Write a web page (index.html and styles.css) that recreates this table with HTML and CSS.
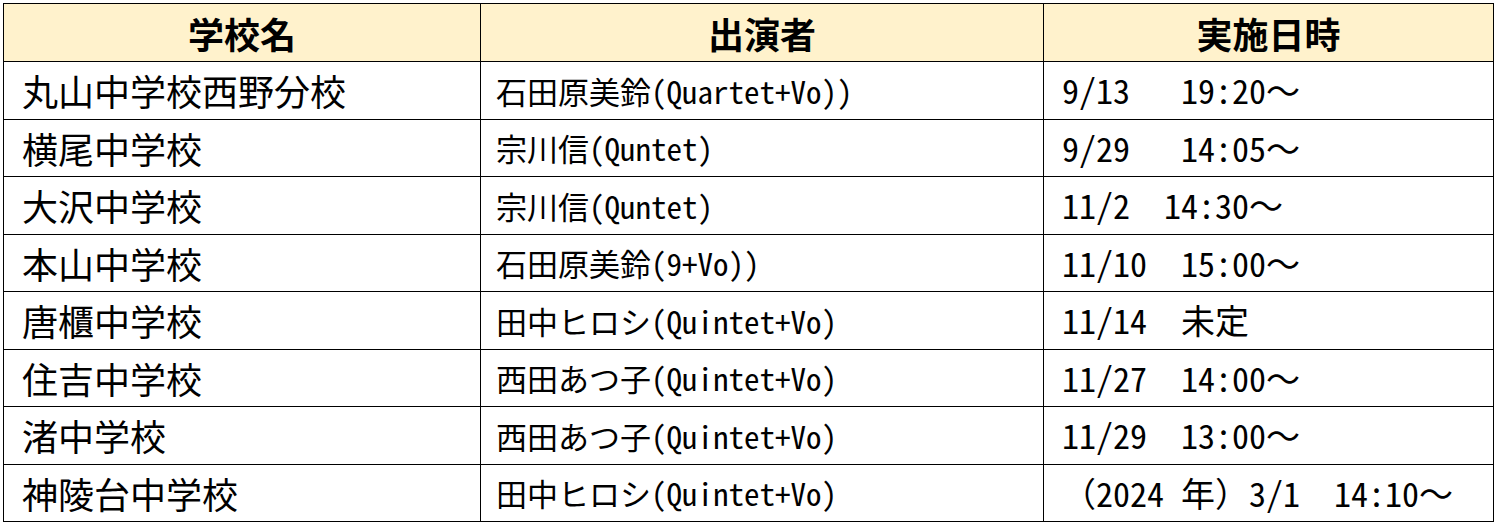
FILE: index.html
```html
<!DOCTYPE html>
<html lang="ja">
<head>
<meta charset="utf-8">
<title>学校公演一覧</title>
<link rel="stylesheet" href="styles.css">
</head>
<body>
<table class="schedule">
  <colgroup>
    <col class="col-school">
    <col class="col-performer">
    <col class="col-date">
  </colgroup>
  <thead>
    <tr class="head-row">
      <th>学校名</th>
      <th>出演者</th>
      <th>実施日時</th>
    </tr>
  </thead>
  <tbody>
    <tr><td class="school">丸山中学校西野分校</td><td class="performer">石田原美鈴(Quartet+Vo))</td><td class="date">9/13<span class="fw">　</span> 19:20<span class="fw">～</span></td></tr>
    <tr><td class="school">横尾中学校</td><td class="performer">宗川信(Quntet)</td><td class="date">9/29<span class="fw">　</span> 14:05<span class="fw">～</span></td></tr>
    <tr><td class="school">大沢中学校</td><td class="performer">宗川信(Quntet)</td><td class="date">11/2<span class="fw">　</span>14:30<span class="fw">～</span></td></tr>
    <tr><td class="school">本山中学校</td><td class="performer">石田原美鈴(9+Vo))</td><td class="date">11/10<span class="fw">　</span>15:00<span class="fw">～</span></td></tr>
    <tr><td class="school">唐櫃中学校</td><td class="performer">田中ヒロシ(Quintet+Vo)</td><td class="date">11/14<span class="fw">　</span>未定</td></tr>
    <tr><td class="school">住吉中学校</td><td class="performer">西田あつ子(Quintet+Vo)</td><td class="date">11/27<span class="fw">　</span>14:00<span class="fw">～</span></td></tr>
    <tr><td class="school">渚中学校</td><td class="performer">西田あつ子(Quintet+Vo)</td><td class="date">11/29<span class="fw">　</span>13:00<span class="fw">～</span></td></tr>
    <tr><td class="school">神陵台中学校</td><td class="performer">田中ヒロシ(Quintet+Vo)</td><td class="date"><span class="fw">（</span>2024 年<span class="fw">）</span>3/1<span class="fw">　</span>14:10<span class="fw">～</span></td></tr>
  </tbody>
</table>
</body>
</html>
```
FILE: styles.css
```css
html, body {
  margin: 0;
  padding: 0;
  background: #ffffff;
}

body {
  padding: 3px 0 0 3px;
  font-family: "Noto Sans CJK JP", "Noto Sans", sans-serif;
  color: #000000;
}

.schedule {
  border-collapse: collapse;
  table-layout: fixed;
  width: 1490px;
}

.col-school { width: 477px; }
.col-performer { width: 563px; }
.col-date { width: 450px; }

.schedule th,
.schedule td {
  border: 1px solid #000000;
  padding: 0;
  white-space: pre;
  overflow: hidden;
  line-height: 1;
  font-feature-settings: "hwid" 1;
}

.fw {
  font-feature-settings: normal;
}

.head-row th {
  height: 57px;
  background: #fff2cc;
  font-size: 36px;
  font-weight: 700;
  text-align: center;
}

.schedule tbody tr {
  height: 57.5px;
}

.school {
  font-size: 36px;
  padding-left: 18px !important;
}

.performer {
  font-size: 31px;
  padding-left: 15px !important;
}

.date {
  font-size: 34px;
  padding-left: 18px !important;
}
```
